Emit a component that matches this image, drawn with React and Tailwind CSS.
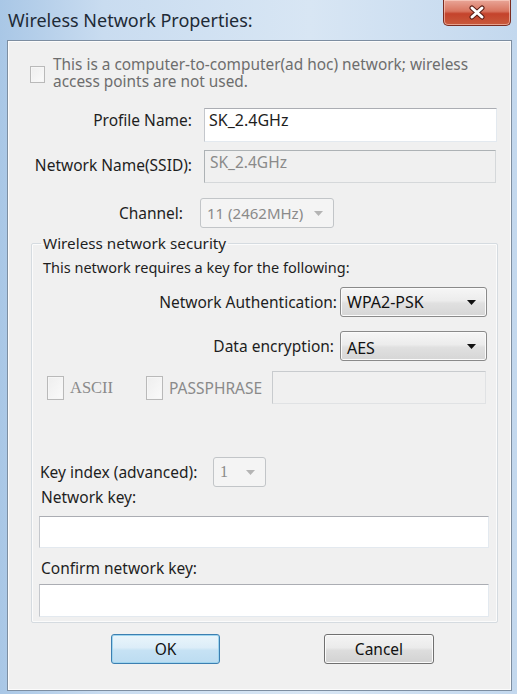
import React from "react";

function Arrow({ disabled }) {
  return (
    <svg width="9" height="5" viewBox="0 0 9 5" className="shrink-0">
      <path d="M0 0H9L4.5 5Z" fill={disabled ? "#b4b4b4" : "#111"} />
    </svg>
  );
}

function Combo({ value, disabled, w, valueClass = "" }) {
  return (
    <div
      className={
        "h-[30px] flex items-center justify-between rounded-[3px] border pl-[6px] pr-[10px] text-[16px] " +
        w +
        " " +
        (disabled
          ? "border-[#c2c5c8] bg-[#f4f4f4] text-[#8a8a8a]"
          : "border-[#8a8a8a] bg-[linear-gradient(to_bottom,#f6f6f6,#ececec_45%,#e0e0e0_55%,#d6d6d6)] text-[#111] shadow-[inset_0_0_0_1px_#fbfbfb]")
      }
    >
      <span className={valueClass}>{value}</span>
      <Arrow disabled={disabled} />
    </div>
  );
}

function Check({ w = "w-[15px]", h = "h-[17px]" }) {
  return (
    <div
      className={
        "shrink-0 border border-[#b9b9b9] bg-[linear-gradient(to_bottom_right,#eeeeee,#fafafa)] shadow-[inset_0_0_0_1px_#f6f6f6] " +
        w +
        " " +
        h
      }
    />
  );
}

export default function App() {
  return (
    <div className="w-[517px] h-[694px] overflow-hidden bg-[linear-gradient(to_right,#a9c7e6,#c9dcf0_20%,#d8e6f4_60%,#c3d8ee)] font-['Noto_Sans','Open_Sans',sans-serif] text-[15.5px] leading-[18px] text-[#1e1e1e]">
      {/* Title bar */}
      <div className="h-[40px] flex justify-between items-start">
        <div className="pl-[8px] pt-[9px] text-[18px] leading-[22px] text-[#1e2a36]">
          Wireless Network Properties:
        </div>
        <div className="mr-[6px] w-[68px] h-[26px] rounded-b-[5px] border border-t-0 border-[#7a2b20] bg-[linear-gradient(to_bottom,#e9a698,#d8745f_45%,#c4432c_55%,#c95a3c)] shadow-[inset_0_0_0_1px_rgba(255,220,210,0.55)] flex items-center justify-center">
          <svg width="18" height="15" viewBox="0 0 18 15">
            <path d="M4 3L14 12M14 3L4 12" stroke="#5a1d14" strokeWidth="5" strokeLinecap="round" />
            <path d="M4 3L14 12M14 3L4 12" stroke="#fff" strokeWidth="3" strokeLinecap="round" />
          </svg>
        </div>
      </div>

      {/* Panel */}
      <div className="ml-[7px] w-[505px] h-[651px] border border-[#7d8ea1] bg-[#f0f0f0] shadow-[inset_0_0_0_1px_#fcfcfc]">
        {/* ad hoc */}
        <div className="pt-[15px] pl-[22px] flex items-start">
          <div className="mt-[10px]">
            <Check />
          </div>
          <div className="ml-[8px] leading-[17px] text-[15.4px] text-[#6d6d6d]">
            This is a computer-to-computer(ad hoc) network; wireless
            <br />
            access points are not used.
          </div>
        </div>

        {/* Profile name */}
        <div className="mt-[18px] flex items-start">
          <div className="w-[184px] text-right pt-[3px]">Profile Name:</div>
          <div className="ml-[12px] w-[293px] h-[34px] bg-white border border-[#abadb3] border-l-[#c4c7cc] border-r-[#e3e9ef] border-b-[#e3e9ef] pl-[4px] pt-[2px] text-[16px]">
            SK_2.4GHz
          </div>
        </div>

        {/* SSID */}
        <div className="mt-[8px] flex items-start">
          <div className="w-[184px] text-right pt-[6px]">Network Name(SSID):</div>
          <div className="ml-[12px] w-[292px] h-[33px] bg-[#f0f0f0] border border-[#adb2b5] border-r-[#d5d8da] border-b-[#d5d8da] pl-[5px] pt-[2px] text-[15.5px] text-[#8a8a8a]">
            SK_2.4GHz
          </div>
        </div>

        {/* Channel */}
        <div className="mt-[15px] flex items-center">
          <div className="w-[175px] text-right">Channel:</div>
          <div className="ml-[17px]">
            <Combo value="11 (2462MHz)" disabled w="w-[134px]" valueClass="text-[15px]" />
          </div>
        </div>

        {/* Group */}
        <fieldset className="mt-[6px] ml-[23px] w-[467px] border border-[#d5dbe0] shadow-[inset_0_0_0_1px_#fbfbfb] rounded-[2px] pb-[5px]">
          <legend className="ml-[9px] px-[2px] leading-[18px] text-[15.25px]">Wireless network security</legend>

          <div className="mt-[6px] pl-[11px] text-[14.5px]">This network requires a key for the following:</div>

          <div className="mt-[11px] flex items-center justify-end pr-[10px]">
            <div className="mr-[3px]">Network Authentication:</div>
            <Combo value="WPA2-PSK" w="w-[147px]" />
          </div>

          <div className="mt-[14px] flex items-center justify-end pr-[10px]">
            <div className="mr-[6px]">Data encryption:</div>
            <Combo value="AES" w="w-[147px]" valueClass="pt-[3px]" />
          </div>

          <div className="mt-[10px] flex items-center pl-[15px]">
            <Check w="w-[17px]" h="h-[24px]" />
            <div className="w-[82px] pl-[6px] text-[#8a8a8a] font-['Liberation_Serif',serif] text-[16.5px]">ASCII</div>
            <Check w="w-[17px]" h="h-[24px]" />
            <div className="w-[109px] pl-[6px] text-[#8a8a8a]">PASSPHRASE</div>
            <div className="w-[214px] h-[33px] bg-[#f0f0f0] border border-[#c8cbce] border-r-[#e0e2e4] border-b-[#e0e2e4]" />
          </div>

          <div className="mt-[53px] flex items-center pl-[8px]">
            <div className="w-[173px]">Key index (advanced):</div>
            <Combo value="1" disabled w="w-[53px]" valueClass="font-['Liberation_Serif',serif] text-[16px]" />
          </div>

          <div className="mt-[1px] pl-[9px]">Network key:</div>
          <div className="mt-[10px] ml-[7px] w-[450px] h-[32px] bg-white border border-[#abadb3] border-l-[#c4c7cc] border-r-[#e3e9ef] border-b-[#e3e9ef]" />

          <div className="mt-[11px] pl-[9px]">Confirm network key:</div>
          <div className="mt-[7px] ml-[7px] w-[450px] h-[33px] bg-white border border-[#abadb3] border-l-[#c4c7cc] border-r-[#e3e9ef] border-b-[#e3e9ef]" />
        </fieldset>

        {/* Buttons */}
        <div className="mt-[11px] flex">
          <button className="ml-[103px] w-[109px] h-[30px] rounded-[3px] border border-[#3c7fb1] bg-[linear-gradient(to_bottom,#eaf5fb,#dcedf8_45%,#c6e2f4_55%,#bcdcf1)] shadow-[inset_0_0_0_1px_#9fd5ef] text-[#111]">
            OK
          </button>
          <button className="ml-[104px] w-[110px] h-[30px] rounded-[3px] border border-[#707070] bg-[linear-gradient(to_bottom,#f4f4f4,#ebebeb_45%,#dddddd_55%,#d2d2d2)] shadow-[inset_0_0_0_1px_#fbfbfb] text-[#111]">
            Cancel
          </button>
        </div>
      </div>
    </div>
  );
}
